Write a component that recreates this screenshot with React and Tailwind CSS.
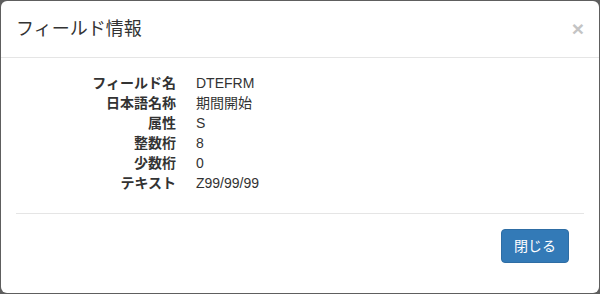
const fields = [
  ["フィールド名", "DTEFRM"],
  ["日本語名称", "期間開始"],
  ["属性", "S"],
  ["整数桁", "8"],
  ["少数桁", "0"],
  ["テキスト", "Z99/99/99"],
];

const App = () => {
  return (
    <div className="w-[600px] h-[294px] bg-[#5e5e5e] pt-px pl-px overflow-hidden font-['Liberation_Sans','Noto_Sans_CJK_JP',sans-serif] text-[#333]">
      <div className="w-[598px] h-[292px] bg-white rounded-[6px] flex flex-col">
        {/* Header */}
        <div className="flex items-center justify-between px-[15px] py-[15px] border-b border-[#e5e5e5]">
          <h4 className="text-[18px] leading-[26px] font-normal">フィールド情報</h4>
          <button className="text-[21px] leading-none font-bold text-[#c4c4c4] -mt-[2px]">×</button>
        </div>

        {/* Body */}
        <div className="px-[15px] pt-[15px] pb-[30px] flex-1 flex flex-col">
          <dl className="grid grid-cols-[160px_1fr] gap-x-5 text-[14px] leading-[20px]">
            {fields.map(([label, value]) => (
              <div key={label} className="contents">
                <dt className="text-right font-bold">{label}</dt>
                <dd>{value}</dd>
              </div>
            ))}
          </dl>

          <hr className="mt-5 border-t border-[#e5e5e5]" />

          {/* Footer */}
          <div className="flex justify-end pt-[15px] pr-[15px]">
            <button className="bg-[#337ab7] border border-[#2e6da4] text-white text-[14px] leading-[20px] px-3 py-[6px] rounded-[4px]">
              閉じる
            </button>
          </div>
        </div>
      </div>
    </div>
  );
};

export default App;
